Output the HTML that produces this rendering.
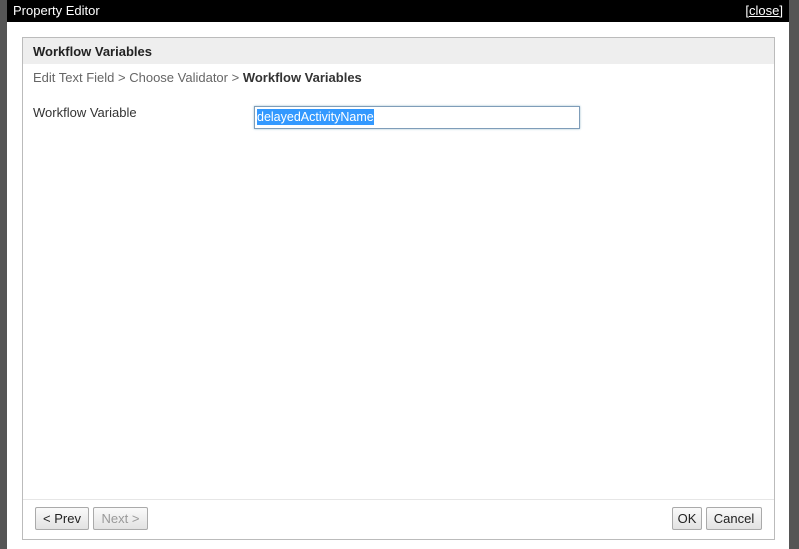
<!DOCTYPE html>
<html><head><style>
*{margin:0;padding:0;box-sizing:border-box}
body{width:799px;height:549px;background:#fff;font-family:"Liberation Sans",sans-serif;font-size:13px;position:relative;overflow:hidden}
.ls{position:absolute;left:0;top:0;width:7px;height:549px;background:#555}
.rs{position:absolute;left:789px;top:0;width:10px;height:549px;background:#555}
.tb{position:absolute;left:7px;top:0;width:782px;height:22px;background:#000;color:#fff}
.tb .t{position:absolute;left:6px;top:3px;font-size:13px}
.tb .c{position:absolute;right:6px;top:3px;text-decoration:underline;font-size:13px}
.panel{position:absolute;left:22px;top:37px;width:753px;height:503px;border:1px solid #bbb;background:#fff}
.hd{height:26px;background:#eee;font-weight:bold;font-size:13px;padding:6px 0 0 10px;color:#222}
.bc{position:absolute;left:10px;top:32px;color:#666;font-size:13px}
.bc b{color:#333}
.lab{position:absolute;left:10px;top:67px;color:#333}
.inp{position:absolute;left:231px;top:68px;width:326px;height:23px;border:1px solid #7f9db9;box-shadow:0 0 2px #9bc;padding:3px 2px;font-size:12.5px}
.inp span{background:#3399ff;color:#fff;padding:1px 0}
.ft{position:absolute;left:0;top:461px;width:751px;border-top:1px solid #e6e6e6}
.btn{position:absolute;top:469px;height:23px;border:1px solid #aaa;background:linear-gradient(#fafafa,#e2e2e2);font-size:13px;text-align:center;line-height:21px;color:#222;border-radius:2px}
</style></head><body>
<div class="ls"></div><div class="rs"></div>
<div class="tb"><span class="t">Property Editor</span><span class="c">[close]</span></div>
<div class="panel">
<div class="hd">Workflow Variables</div>
<div class="bc">Edit Text Field &gt; Choose Validator &gt; <b>Workflow Variables</b></div>
<div class="lab">Workflow Variable</div>
<div class="inp"><span>delayedActivityName</span></div>
<div class="ft"></div>
<div class="btn" style="left:12px;width:54px">&lt; Prev</div>
<div class="btn" style="left:70px;width:55px;color:#999">Next &gt;</div>
<div class="btn" style="left:649px;width:30px">OK</div>
<div class="btn" style="left:683px;width:56px">Cancel</div>
</div>
</body></html>
